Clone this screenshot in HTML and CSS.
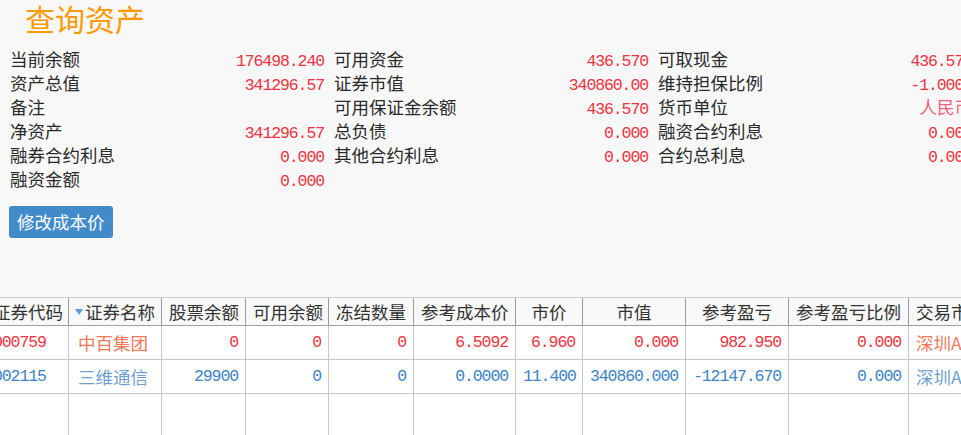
FILE: index.html
```html
<!DOCTYPE html>
<html lang="zh-CN">
<head>
<meta charset="utf-8">
<title>查询资产</title>
<link rel="stylesheet" href="styles.css">
</head>
<body>
<div class="page">
  <h1 class="title">查询资产</h1>

  <div class="summary">
    <div class="item"><span class="label">当前余额</span><span class="num">176498.240</span></div>
    <div class="item"><span class="label">可用资金</span><span class="num">436.570</span></div>
    <div class="item"><span class="label">可取现金</span><span class="num">436.570</span></div>

    <div class="item"><span class="label">资产总值</span><span class="num">341296.57</span></div>
    <div class="item"><span class="label">证券市值</span><span class="num">340860.00</span></div>
    <div class="item"><span class="label">维持担保比例</span><span class="num">-1.0000</span></div>

    <div class="item"><span class="label">备注</span><span class="num"></span></div>
    <div class="item"><span class="label">可用保证金余额</span><span class="num">436.570</span></div>
    <div class="item"><span class="label">货币单位</span><span class="text-val">人民币</span></div>

    <div class="item"><span class="label">净资产</span><span class="num">341296.57</span></div>
    <div class="item"><span class="label">总负债</span><span class="num">0.000</span></div>
    <div class="item"><span class="label">融资合约利息</span><span class="num">0.000</span></div>

    <div class="item"><span class="label">融券合约利息</span><span class="num">0.000</span></div>
    <div class="item"><span class="label">其他合约利息</span><span class="num">0.000</span></div>
    <div class="item"><span class="label">合约总利息</span><span class="num">0.000</span></div>

    <div class="item"><span class="label">融资金额</span><span class="num">0.000</span></div>
  </div>

  <div class="actions">
    <button class="btn" type="button">修改成本价</button>
  </div>

  <div class="holdings">
    <div class="holdings-inner">
      <div class="row head">
        <div class="cell">证券代码</div>
        <div class="cell sorted"><span class="sort-arrow"></span>证券名称</div>
        <div class="cell">股票余额</div>
        <div class="cell">可用余额</div>
        <div class="cell">冻结数量</div>
        <div class="cell">参考成本价</div>
        <div class="cell">市价</div>
        <div class="cell">市值</div>
        <div class="cell">参考盈亏</div>
        <div class="cell">参考盈亏比例</div>
        <div class="cell">交易市场</div>
      </div>

      <div class="row body up">
        <div class="cell code num">000759</div>
        <div class="cell name">中百集团</div>
        <div class="cell r num">0</div>
        <div class="cell r num">0</div>
        <div class="cell r num">0</div>
        <div class="cell r num">6.5092</div>
        <div class="cell r num">6.960</div>
        <div class="cell r num">0.000</div>
        <div class="cell r num">982.950</div>
        <div class="cell r num">0.000</div>
        <div class="cell market">深圳A股</div>
      </div>

      <div class="row body down">
        <div class="cell code num">002115</div>
        <div class="cell name">三维通信</div>
        <div class="cell r num">29900</div>
        <div class="cell r num">0</div>
        <div class="cell r num">0</div>
        <div class="cell r num">0.0000</div>
        <div class="cell r num">11.400</div>
        <div class="cell r num">340860.000</div>
        <div class="cell r num">-12147.670</div>
        <div class="cell r num">0.000</div>
        <div class="cell market">深圳A股</div>
      </div>

      <div class="row filler">
        <div class="cell"></div><div class="cell"></div><div class="cell"></div>
        <div class="cell"></div><div class="cell"></div><div class="cell"></div>
        <div class="cell"></div><div class="cell"></div><div class="cell"></div>
        <div class="cell"></div><div class="cell"></div>
      </div>
    </div>
  </div>
</div>
</body>
</html>
```

FILE: styles.css
```css
html, body {
  margin: 0;
  padding: 0;
  overflow: hidden;
  background: #f8f8f8;
}

body {
  font-family: "Noto Sans CJK SC", "Noto Sans", sans-serif;
  font-size: 17.5px;
  color: #333;
}

.page {
  width: 961px;
}

/* page heading */
.title {
  margin: 0;
  padding-left: 25px;
  height: 36px;
  line-height: 36px;
  font-size: 30px;
  font-weight: normal;
  color: #ff9900;
}

/* account summary: three label/value columns */
.summary {
  margin-top: 11px;
  padding-left: 10px;
  display: grid;
  grid-template-columns: repeat(3, 314px);
  column-gap: 10px;
}

.item {
  display: flex;
  justify-content: space-between;
  align-items: baseline;
  height: 24px;
  line-height: 24px;
  white-space: nowrap;
}

.label {
  color: #2a2a2a;
}

.num {
  font-family: "Liberation Mono", "DejaVu Sans Mono", monospace;
  font-size: 16.5px;
  letter-spacing: -1.1px;
}

.item .num,
.text-val {
  color: #ee3340;
}

.text-val {
  color: #f0607a;
}

.actions {
  margin-top: 15px;
  padding-left: 9px;
}

.btn {
  display: block;
  height: 32px;
  padding: 0 8px;
  border: none;
  border-radius: 3px;
  background: #428bca;
  color: #fff;
  font-family: inherit;
  font-size: 17.5px;
  line-height: 32px;
  cursor: pointer;
}

/* holdings grid */
.holdings {
  margin-top: 59px;
  overflow: hidden;
  background: #fff;
}

.holdings-inner {
  margin-left: -14px;
  width: 1007px;
}

.row {
  display: grid;
  grid-template-columns: 83px 93px 84px 83px 85px 102px 67px 103px 103px 120px 84px;
}

.cell {
  box-sizing: border-box;
  padding: 0 7px;
  white-space: nowrap;
  overflow: hidden;
  border-right: 1px solid #c8c8c8;
}

.head {
  background: #f8f8f8;
  border-top: 1px solid #cfcfcf;
  border-bottom: 1px solid #a0a0a0;
}

.head .cell {
  height: 27px;
  line-height: 27px;
  text-align: center;
  color: #333;
  border-right-color: #9a9a9a;
}

.sorted {
  display: flex;
  align-items: center;
  justify-content: center;
  padding: 0 2px;
}

.sort-arrow {
  width: 0;
  height: 0;
  margin-right: 2px;
  border-left: 4px solid transparent;
  border-right: 4px solid transparent;
  border-top: 6px solid #5b9bd5;
}

.body .cell {
  height: 34px;
  line-height: 33px;
  border-bottom: 1px solid #c8c8c8;
}

.body .cell.r {
  text-align: right;
}

.body .cell.name {
  padding-left: 9px;
}

.up .num { color: #f0343e; }
.up .name,
.up .market { color: #f07858; }

.down .num { color: #3c84c6; }
.down .name,
.down .market { color: #6f9fd2; }

.filler .cell {
  height: 60px;
}
```
